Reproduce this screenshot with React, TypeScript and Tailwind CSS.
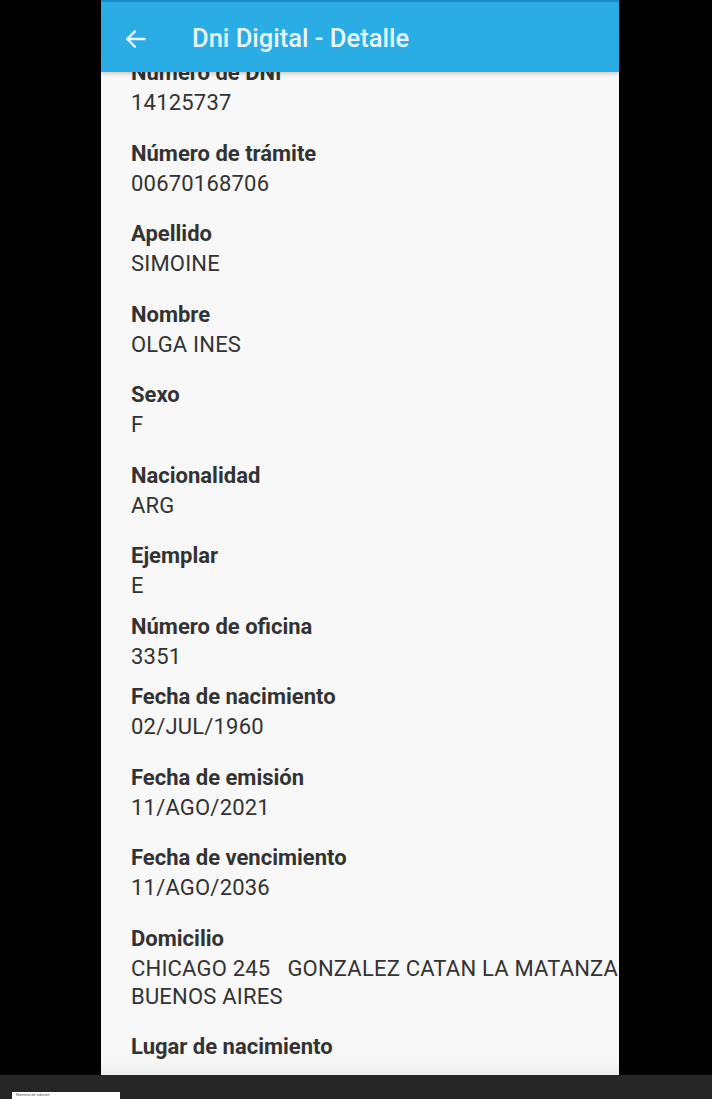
import React from "react";

type Field = { label: string; value: string[]; gap?: "tight" };

const fields: Field[] = [
  { label: "Número de DNI", value: ["14125737"] },
  { label: "Número de trámite", value: ["00670168706"] },
  { label: "Apellido", value: ["SIMOINE"] },
  { label: "Nombre", value: ["OLGA INES"] },
  { label: "Sexo", value: ["F"] },
  { label: "Nacionalidad", value: ["ARG"] },
  { label: "Ejemplar", value: ["E"], gap: "tight" },
  { label: "Número de oficina", value: ["3351"], gap: "tight" },
  { label: "Fecha de nacimiento", value: ["02/JUL/1960"] },
  { label: "Fecha de emisión", value: ["11/AGO/2021"] },
  { label: "Fecha de vencimiento", value: ["11/AGO/2036"] },
  { label: "Domicilio", value: ["CHICAGO 245   GONZALEZ CATAN LA MATANZA", "BUENOS AIRES"] },
  { label: "Lugar de nacimiento", value: ["BUENOS AIRES"] },
];

function Row({ field }: { field: Field }) {
  return (
    <div className={field.gap === "tight" ? "pb-[10.5px]" : "pb-[20.5px]"}>
      <p className="text-[22px] leading-[32px] font-bold text-[#333333]">{field.label}</p>
      {field.value.map((line) => (
        <p key={line} className="text-[22px] leading-[28px] text-[#333333] whitespace-pre tracking-[0.2px]">
          {line}
        </p>
      ))}
    </div>
  );
}

export default function App() {
  return (
    <div
      className="w-[712px] h-[1099px] bg-black flex flex-col overflow-hidden"
      style={{ fontFamily: "Roboto, 'Liberation Sans', sans-serif" }}
    >
      <div className="flex-1 flex pl-[101px] min-h-0">
        <div className="w-[518px] h-[1075px] bg-[#f8f8f8] flex flex-col overflow-hidden relative">
          {/* App bar */}
          <div className="h-[2px] bg-[#1b8fc6]" />
          <header className="h-[70px] pt-[3px] bg-[#2aace4] flex items-center shadow-[0_2px_4px_rgba(0,0,0,0.18)] z-10 shrink-0">
            <svg
              width="26"
              height="26"
              viewBox="0 0 24 24"
              className="ml-[22px]"
              fill="none"
              stroke="#eaf7fd"
              strokeWidth="2.2"
              strokeLinecap="round"
              strokeLinejoin="round"
            >
              <path d="M20 12H4" />
              <path d="M11 5l-7 7 7 7" />
            </svg>
            <h1 className="ml-[43px] text-[25.5px] font-medium text-[#e8f6fd]">
              Dni Digital - Detalle
            </h1>
          </header>

          {/* Detail list, scrolled */}
          <div className="flex-1 min-h-0 overflow-hidden">
            <div className="-mt-[15px] pl-[30px]">
              {fields.map((f) => (
                <Row key={f.label} field={f} />
              ))}
            </div>
          </div>
          <div className="absolute left-0 right-0 bottom-0 h-[15px] bg-gradient-to-b from-[#f8f8f8] to-[#ececec]" />
        </div>
      </div>

      {/* Bottom bar */}
      <div className="h-[24px] bg-[#262626] relative shrink-0">
        <div className="absolute left-[12px] top-[17px] w-[108px] h-[7px] bg-white px-[4px] overflow-hidden">
          <span className="block text-[4px] leading-[6px] text-[#555]">Número de trámite</span>
        </div>
      </div>
    </div>
  );
}
